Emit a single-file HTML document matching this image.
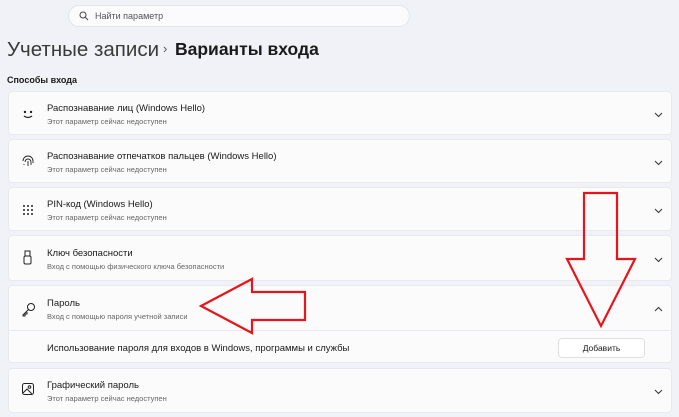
<!DOCTYPE html>
<html><head><meta charset="utf-8"><style>
body{margin:0;width:679px;height:417px;background:#f1f2f7;font-family:"Liberation Sans","Noto Sans CJK SC",sans-serif;position:relative;overflow:hidden;color:#1a1a1a}
.search{position:absolute;left:68px;top:5px;width:342px;height:22px;background:#fbfbfd;border:1px solid #e2e3e8;border-radius:12px;box-sizing:border-box}
.search span{position:absolute;left:26px;top:5px;font-size:9px;color:#555}
.title{position:absolute;top:38px;white-space:nowrap}
.sec{position:absolute;left:7px;top:75px;font-size:9px;font-weight:bold}
.card{position:absolute;left:8px;width:664px;background:#fbfbfc;border:1px solid #e8e9ee;border-radius:4px;box-sizing:border-box}
.t{position:absolute;left:38px;font-size:9.5px}
.s{position:absolute;left:38px;font-size:7.5px;color:#666}
.ic{position:absolute;left:12px}
.ch{position:absolute;left:644px;width:11px;height:8px}
.btn{position:absolute;left:549px;width:87px;height:20px;background:#fff;border:1px solid #e0e0e0;border-radius:4px;font-size:8.5px;text-align:center;line-height:19px;box-sizing:border-box}
</style></head><body>
<div class="search"><svg style="position:absolute;left:10px;top:5px" width="10" height="10"><circle cx="4" cy="4" r="3" fill="none" stroke="#444" stroke-width="1"/><line x1="6.3" y1="6.3" x2="9" y2="9" stroke="#444"/></svg><span>Найти параметр</span></div>
<div class="title" style="left:7px;font-size:20.5px;color:#3a3a3a">Учетные записи</div>
<div class="title" style="left:163px;top:41px;font-size:13px;color:#555">›</div>
<div class="title" style="left:175px;top:39px;font-size:17.5px;font-weight:bold">Варианты входа</div>
<div class="sec">Способы входа</div>

<div class="card" style="top:91px;height:44px">
<svg class="ic" style="top:15px" width="14" height="14"><circle cx="4" cy="5" r="1.2" fill="#222"/><circle cx="10" cy="5" r="1.2" fill="#222"/><path d="M3 9 Q7 12 11 9" fill="none" stroke="#222" stroke-width="1.3"/></svg>
<div class="t" style="top:11px">Распознавание лиц (Windows Hello)</div><div class="s" style="top:25px">Этот параметр сейчас недоступен</div>
<svg class="ch" style="top:19px"><path d="M2 2 L5.5 5.5 L9 2" fill="none" stroke="#333" stroke-width="1"/></svg></div>

<div class="card" style="top:139px;height:44px">
<svg class="ic" style="top:14px" width="14" height="14" fill="none" stroke="#222" stroke-width="0.9"><path d="M2 7a5 5 0 0 1 10 0v2M4 8a3 3 0 0 1 6 0v3M7 7v5M3 10v1"/></svg>
<div class="t" style="top:11px">Распознавание отпечатков пальцев (Windows Hello)</div><div class="s" style="top:25px">Этот параметр сейчас недоступен</div>
<svg class="ch" style="top:19px"><path d="M2 2 L5.5 5.5 L9 2" fill="none" stroke="#333" stroke-width="1"/></svg></div>

<div class="card" style="top:187px;height:44px">
<svg class="ic" style="top:16px" width="14" height="14" fill="#222"><circle cx="3" cy="2" r="1"/><circle cx="7" cy="2" r="1"/><circle cx="11" cy="2" r="1"/><circle cx="3" cy="6" r="1"/><circle cx="7" cy="6" r="1"/><circle cx="11" cy="6" r="1"/><circle cx="3" cy="10" r="1"/><circle cx="7" cy="10" r="1"/><circle cx="11" cy="10" r="1"/></svg>
<div class="t" style="top:11px">PIN-код (Windows Hello)</div><div class="s" style="top:25px">Этот параметр сейчас недоступен</div>
<svg class="ch" style="top:19px"><path d="M2 2 L5.5 5.5 L9 2" fill="none" stroke="#333" stroke-width="1"/></svg></div>

<div class="card" style="top:235px;height:46px">
<svg class="ic" style="top:14px" width="14" height="16" fill="none" stroke="#222" stroke-width="1"><rect x="4" y="1" width="5" height="5"/><rect x="3" y="6" width="7" height="8" rx="1.5"/></svg>
<div class="t" style="top:12px">Ключ безопасности</div><div class="s" style="top:26px">Вход с помощью физического ключа безопасности</div>
<svg class="ch" style="top:20px"><path d="M2 2 L5.5 5.5 L9 2" fill="none" stroke="#333" stroke-width="1"/></svg></div>

<div class="card" style="top:285px;height:78px">
<svg class="ic" style="top:15px" width="16" height="16" fill="none" stroke="#222" stroke-width="1"><circle cx="10" cy="6" r="3.5"/><path d="M7.5 8.5 L2 14 L2 15 L4 15 L4 13 L6 13 L6 11"/></svg>
<div class="t" style="top:12px">Пароль</div><div class="s" style="top:26px">Вход с помощью пароля учетной записи</div>
<svg class="ch" style="top:19px"><path d="M2 6 L5.5 2.5 L9 6" fill="none" stroke="#333" stroke-width="1"/></svg>
<div style="position:absolute;left:0;right:0;top:44px;border-top:1px solid #e8e9ee"></div>
<div class="t" style="top:57px">Использование пароля для входов в Windows, программы и службы</div>
<div class="btn" style="top:52px">Добавить</div></div>

<div class="card" style="top:368px;height:45px">
<svg class="ic" style="top:13px" width="14" height="14" fill="none" stroke="#222" stroke-width="1"><rect x="1.5" y="1.5" width="11" height="11" rx="2"/><circle cx="8.5" cy="5" r="1.3"/><path d="M2 11 L6 7 L11 12"/></svg>
<div class="t" style="top:11px">Графический пароль</div><div class="s" style="top:25px">Этот параметр сейчас недоступен</div>
<svg class="ch" style="top:19px"><path d="M2 2 L5.5 5.5 L9 2" fill="none" stroke="#333" stroke-width="1"/></svg></div>

<svg style="position:absolute;left:0;top:0" width="679" height="417" fill="none" stroke="#e8141c" stroke-width="2.2">
<path d="M584 193 L617 193 L617 259 L635 259 L601 326 L567 259 L584 259 Z"/>
<path d="M201 306 L252 279 L252 292 L305 292 L305 320 L252 320 L252 333 Z"/>
</svg>
</body></html>
